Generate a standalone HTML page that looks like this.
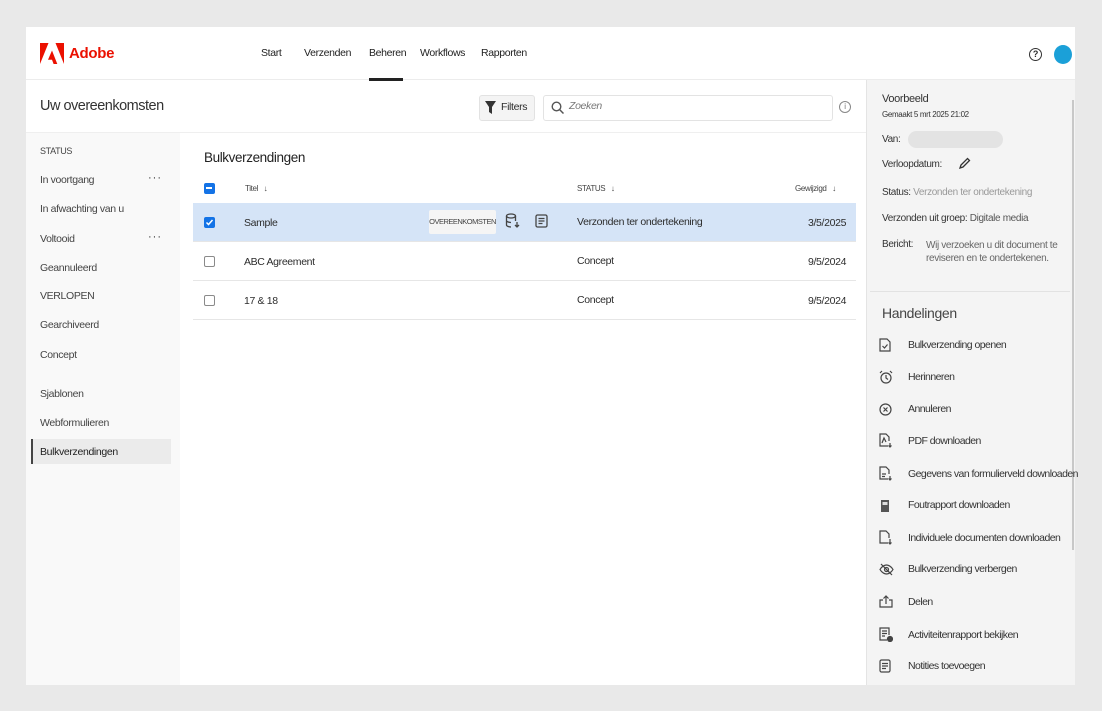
<!DOCTYPE html>
<html><head><meta charset="utf-8"><style>
*{margin:0;padding:0;box-sizing:border-box}
body{width:1102px;height:711px;background:#e9e9e9;font-family:"Liberation Sans",sans-serif;color:#2c2c2c;position:relative;overflow:hidden;font-size:11px;letter-spacing:-0.35px}
.a{position:absolute}
.card{left:26px;top:27px;width:1049px;height:658px;background:#fff}
.nav span{position:absolute;top:47px;font-size:10.5px;color:#222}
.side div{position:absolute;left:40px;font-size:10.5px;color:#444}
.cb{position:absolute;width:11px;height:11px;border:1.5px solid #8a8a8a;border-radius:2px;background:#fff}
.cbf{background:#1473e6;border-color:#1473e6}
.row{position:absolute;left:193px;width:663px;height:39px;border-bottom:1px solid #e6e6e6}
.rp div{position:absolute;left:882px;font-size:10px;color:#333}
.act div{position:absolute;left:908px;font-size:10.5px;color:#333;letter-spacing:-0.55px;white-space:nowrap}
.act svg{position:absolute;left:879px}
</style></head><body>
<div class="a card"></div>
<div class="a" style="left:26px;top:79px;width:1049px;height:1px;background:#ececec"></div>
<svg class="a" style="left:40px;top:43px" width="24" height="21" viewBox="0 0 24 21"><path d="M0 0h8.5L0 21z" fill="#eb1000"/><path d="M15.5 0H24v21z" fill="#eb1000"/><path d="M12 7.5l5.3 13.5h-3.7l-1.6-4.2H8z" fill="#eb1000"/></svg>
<div class="a" style="left:69px;top:45px;font-size:15px;font-weight:bold;color:#eb1000;letter-spacing:-0.3px">Adobe</div>
<div class="nav"><span style="left:261px">Start</span><span style="left:304px">Verzenden</span><span style="left:369px">Beheren</span><span style="left:420px">Workflows</span><span style="left:481px">Rapporten</span></div>
<div class="a" style="left:369px;top:78px;width:34px;height:3px;background:#222"></div>
<div class="a" style="left:1029px;top:48px;width:13px;height:13px;border:1.5px solid #333;border-radius:50%;font-size:9px;text-align:center;line-height:10px;font-weight:bold">?</div>
<div class="a" style="left:1054px;top:45px;width:18px;height:19px;border-radius:50%;background:#1ba0d8"></div>
<div class="a" style="left:40px;top:98px;font-size:14.5px;color:#333;letter-spacing:-0.5px">Uw overeenkomsten</div>
<div class="a" style="left:479px;top:95px;width:56px;height:26px;background:#f4f4f4;border:1px solid #e2e2e2;border-radius:3px"></div>
<svg class="a" style="left:485px;top:101px" width="11" height="13"><path d="M0 0h11L7 6v7L4 11V6z" fill="#333"/></svg>
<div class="a" style="left:501px;top:101px;font-size:10.5px">Filters</div>
<div class="a" style="left:543px;top:95px;width:290px;height:26px;border:1px solid #e3e3e3;border-radius:3px"></div>
<svg class="a" style="left:551px;top:101px" width="13" height="13"><circle cx="5.5" cy="5.5" r="4.3" stroke="#555" stroke-width="1.4" fill="none"/><path d="M8.5 8.5l4 4" stroke="#555" stroke-width="1.5"/></svg>
<div class="a" style="left:569px;top:100px;font-size:10.5px;font-style:italic;color:#777">Zoeken</div>
<div class="a" style="left:839px;top:101px;width:12px;height:12px;border:1px solid #888;border-radius:50%;font-size:8px;text-align:center;line-height:10px;color:#777">i</div>
<div class="a" style="left:26px;top:132px;width:154px;height:553px;background:#f9f9f9"></div>
<div class="a" style="left:26px;top:132px;width:840px;height:1px;background:#efefef"></div>
<div class="side">
<div style="top:146px;font-size:9px">STATUS</div>
<div style="top:174px">In voortgang</div>
<div style="top:203px">In afwachting van u</div>
<div style="top:233px">Voltooid</div>
<div style="top:262px">Geannuleerd</div>
<div style="top:290px">VERLOPEN</div>
<div style="top:319px">Gearchiveerd</div>
<div style="top:349px">Concept</div>
<div style="top:388px">Sjablonen</div>
<div style="top:417px">Webformulieren</div>
</div>
<div class="a" style="left:148px;top:172px;font-size:11px;letter-spacing:1px">···</div>
<div class="a" style="left:148px;top:231px;font-size:11px;letter-spacing:1px">···</div>
<div class="a" style="left:31px;top:439px;width:140px;height:25px;background:#ebebeb;border-left:2px solid #444"></div>
<div class="a" style="left:40px;top:446px;font-size:10.5px;color:#222">Bulkverzendingen</div>
<div class="a" style="left:204px;top:150px;font-size:13.5px;color:#222;letter-spacing:-0.4px">Bulkverzendingen</div>
<div class="cb cbf" style="left:204px;top:183px"><div style="position:absolute;left:1px;top:3px;width:6px;height:1.5px;background:#fff"></div></div>
<div class="a" style="left:245px;top:184px;font-size:8px;color:#444">Titel &nbsp;&nbsp;↓</div>
<div class="a" style="left:577px;top:184px;font-size:8px;color:#444">STATUS &nbsp;&nbsp;↓</div>
<div class="a" style="left:795px;top:184px;font-size:8px;color:#444">Gewijzigd &nbsp;&nbsp;↓</div>
<div class="row" style="top:203px;background:#d5e4f7"></div>
<div class="row" style="top:242px"></div>
<div class="row" style="top:281px"></div>
<div class="cb cbf" style="left:204px;top:217px"><svg style="position:absolute;left:0;top:0" width="9" height="9"><path d="M1.5 4.5l2 2 4-4.5" stroke="#fff" stroke-width="1.5" fill="none"/></svg></div>
<div class="cb" style="left:204px;top:256px"></div>
<div class="cb" style="left:204px;top:295px"></div>
<div class="a" style="left:244px;top:217px;font-size:10.5px">Sample</div>
<div class="a" style="left:244px;top:256px;font-size:10.5px">ABC Agreement</div>
<div class="a" style="left:244px;top:295px;font-size:10.5px">17 &amp; 18</div>
<div class="a" style="left:429px;top:210px;width:67px;height:24px;background:#f5f5f5;border-radius:2px;font-size:7.5px;line-height:24px;text-align:center;color:#444;letter-spacing:-0.5px">OVEREENKOMSTEN</div>
<svg class="a" style="left:505px;top:213px" width="16" height="16" fill="none" stroke="#444" stroke-width="1.3"><ellipse cx="6" cy="3" rx="4.5" ry="2"/><path d="M1.5 3v9c0 1 2 2 4.5 2M10.5 3v5M1.5 7.5c0 1 2 2 4.5 2M12 9v5M10 12l2 2 2-2"/></svg>
<svg class="a" style="left:535px;top:214px" width="14" height="14" fill="none" stroke="#444" stroke-width="1.3"><rect x="1" y="1" width="11" height="12" rx="1.5"/><path d="M3.5 4.5h6M3.5 7h6M3.5 9.5h4"/></svg>
<div class="a" style="left:577px;top:216px;font-size:10.5px">Verzonden ter ondertekening</div>
<div class="a" style="left:577px;top:255px;font-size:10.5px">Concept</div>
<div class="a" style="left:577px;top:294px;font-size:10.5px">Concept</div>
<div class="a" style="left:808px;top:217px;font-size:10.5px">3/5/2025</div>
<div class="a" style="left:808px;top:256px;font-size:10.5px">9/5/2024</div>
<div class="a" style="left:808px;top:295px;font-size:10.5px">9/5/2024</div>
<div class="a" style="left:866px;top:80px;width:209px;height:605px;background:#f4f4f4;border-left:1px solid #e4e4e4"></div>
<div class="a" style="left:1072px;top:100px;width:2px;height:450px;background:#c8c8c8"></div>
<div class="a" style="left:870px;top:291px;width:200px;height:1px;background:#e2e2e2"></div>
<div class="rp">
<div style="top:93px;font-size:11px">Voorbeeld</div>
<div style="top:110px;font-size:8px">Gemaakt 5 mrt 2025 21:02</div>
<div style="top:134px">Van:</div>
<div style="top:159px">Verloopdatum:</div>
<div style="top:187px">Status: <span style="color:#999">Verzonden ter ondertekening</span></div>
<div style="top:213px">Verzonden uit groep: <span style="color:#555">Digitale media</span></div>
<div style="top:239px">Bericht:</div>
<div style="top:239px;left:926px;color:#666;line-height:13px">Wij verzoeken u dit document te<br>reviseren en te ondertekenen.</div>
<div style="top:305px;font-size:14px;color:#444">Handelingen</div>
</div>
<div class="a" style="left:908px;top:131px;width:95px;height:17px;border-radius:9px;background:#e3e3e3"></div>
<svg class="a" style="left:958px;top:157px" width="13" height="13" fill="none" stroke="#333" stroke-width="1.3"><path d="M2 11l1-3 6.5-6.5 2 2L5 10z"/></svg>
<div class="act">
<svg style="top:338px" width="12" height="14" fill="none" stroke="#444" stroke-width="1.2"><path d="M1 1h7l3 3v9H1z M3.5 8l2 2 3-3.5"/></svg><div style="top:339px">Bulkverzending openen</div>
<svg style="top:370px" width="14" height="14" fill="none" stroke="#444" stroke-width="1.2"><circle cx="7" cy="8" r="5"/><path d="M7 5v3l2 1.5M1 3l2-2M13 3l-2-2"/></svg><div style="top:371px">Herinneren</div>
<svg style="top:403px" width="13" height="13" fill="none" stroke="#444" stroke-width="1.2"><circle cx="6.5" cy="6.5" r="5.5"/><path d="M4.5 4.5l4 4M8.5 4.5l-4 4"/></svg><div style="top:403px">Annuleren</div>
<svg style="top:433px" width="14" height="15" fill="none" stroke="#444" stroke-width="1.2"><path d="M9 13H1V1h6l3 3v4M3 10l2-5 2 4M11 10v4M9.5 12.5l1.5 1.5 1.5-1.5"/></svg><div style="top:435px">PDF downloaden</div>
<svg style="top:466px" width="14" height="15" fill="none" stroke="#444" stroke-width="1.2"><path d="M9 13H1V1h6l3 3v4M3 8h4M3 10.5h3M11 10v4M9.5 12.5l1.5 1.5 1.5-1.5"/></svg><div style="top:468px">Gegevens van formulierveld downloaden</div>
<svg style="top:499px" width="12" height="14"><rect x="2" y="1" width="8" height="12" fill="#555"/><rect x="3.5" y="3" width="5" height="3" fill="#ddd"/></svg><div style="top:499px">Foutrapport downloaden</div>
<svg style="top:530px" width="14" height="15" fill="none" stroke="#444" stroke-width="1.2"><path d="M9 13H1V1h6l3 3v4M11 9v5M9.5 12.5l1.5 1.5 1.5-1.5"/></svg><div style="top:532px">Individuele documenten downloaden</div>
<svg style="top:563px" width="15" height="13" fill="none" stroke="#444" stroke-width="1.2"><path d="M1 6.5C3 3 6 2 7.5 2S12 3 14 6.5C12 10 9 11 7.5 11S3 10 1 6.5z"/><circle cx="7.5" cy="6.5" r="2"/><path d="M2 1l11 11"/></svg><div style="top:563px">Bulkverzending verbergen</div>
<svg style="top:595px" width="14" height="13" fill="none" stroke="#444" stroke-width="1.2"><path d="M4 5H1v7h12V5h-3M7 9V1M4.5 3.5L7 1l2.5 2.5"/></svg><div style="top:596px">Delen</div>
<svg style="top:627px" width="14" height="15" fill="none" stroke="#444" stroke-width="1.2"><path d="M8 13H1V1h9v7M3 4h5M3 6.5h5M3 9h3"/><circle cx="11" cy="12" r="2.5" fill="#444"/></svg><div style="top:629px">Activiteitenrapport bekijken</div>
<svg style="top:659px" width="13" height="14" fill="none" stroke="#444" stroke-width="1.2"><rect x="1" y="1" width="10" height="12" rx="1.5"/><path d="M3 4.5h6M3 7h6M3 9.5h4"/></svg><div style="top:660px">Notities toevoegen</div>
</div>
</body></html>
